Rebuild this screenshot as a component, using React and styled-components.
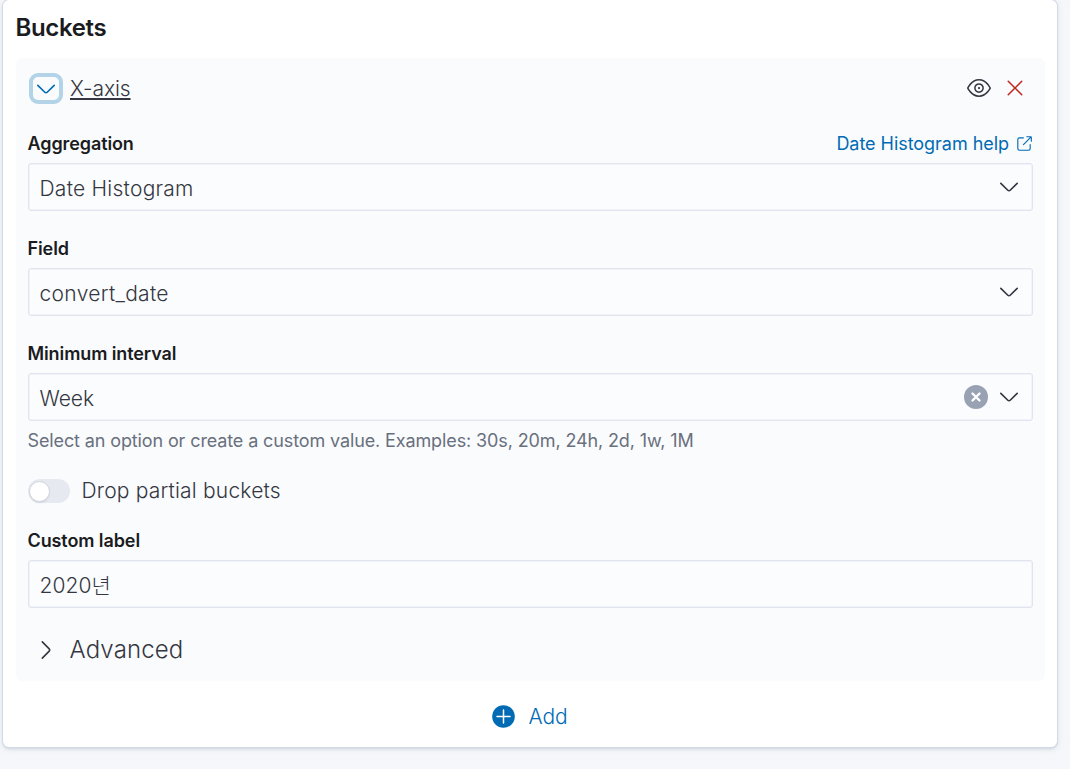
import React from "react";
import styled, { createGlobalStyle } from "styled-components";

const GlobalStyle = createGlobalStyle`
  * { box-sizing: border-box; }
  html, body { margin: 0; height: 100%; }
  body {
    background: #f5f7fa;
    color: #343741;
    font-family: Inter, "Noto Sans CJK KR", sans-serif;
    font-weight: 300;
    letter-spacing: -0.08px;
    overflow: hidden;
  }
  button, input { font: inherit; color: inherit; letter-spacing: inherit; }
`;

const Page = styled.main`
  height: 769px;
  padding: 0 13px 22px 3px;
`;

const Card = styled.section`
  height: 747px;
  padding: 10px 12px 0 13px;
  background: #fff;
  border-radius: 6px;
  box-shadow: 0 0 0 1px #d3dae6, 0 2px 3px rgba(152, 162, 179, 0.35), 0 1px 8px rgba(152, 162, 179, 0.18);
`;

const Title = styled.h2`
  margin: 0 0 0 -0.5px;
  height: 48px;
  font-size: 24px;
  line-height: 36px;
  font-weight: 600;
  letter-spacing: -0.36px;
  color: #1a1c21;
`;

const Bucket = styled.div`
  height: 623px;
  width: 1029px;
  padding: 7px 12px 0;
  background: #fafbfd;
  border-radius: 6px;
  display: flex;
  flex-direction: column;
`;

const BucketHeader = styled.header`
  height: 46px;
  display: flex;
  align-items: center;
  padding: 0 6px 0 1px;
`;

const Toggle = styled.button`
  width: 34px;
  height: 31px;
  margin: 1px 7px 0 0;
  padding: 0;
  border: 4px solid #b2d3e8;
  border-radius: 9px;
  background: #fafbfd;
  color: #006bb4;
  display: grid;
  place-items: center;
`;

const AxisName = styled.span`
  flex: 1;
  font-size: 21px;
  line-height: 30px;
  padding-top: 1px;
  letter-spacing: -0.1px;
  text-decoration: underline;
  text-decoration-thickness: 2px;
  text-underline-offset: 2px;
  text-decoration-skip-ink: none;
`;

const IconButton = styled.button`
  width: 24px;
  height: 24px;
  margin-left: 12px;
  padding: 0;
  border: 0;
  background: none;
  color: ${(p) => (p.$danger ? "#bd271e" : "#343741")};
`;

const Glyph = styled.svg`
  display: block;
  flex: none;
  fill: currentColor;
`;

const Field = styled.div`
  display: flex;
  flex-direction: column;
  margin-top: ${(p) => p.$top}px;
`;

const LabelRow = styled.div`
  display: flex;
  justify-content: space-between;
  align-items: center;
  height: 27px;
  margin-bottom: 6px;
`;

const Label = styled.label`
  margin-left: -0.5px;
  font-size: 18px;
  line-height: 27px;
  font-weight: 600;
  letter-spacing: -0.1px;
  color: #1a1c21;
`;

const HelpLink = styled.a`
  display: flex;
  align-items: center;
  gap: 6px;
  font-size: 18px;
  font-weight: 400;
  letter-spacing: -0.04px;
  color: #006bb4;
`;

const Control = styled.div`
  height: 48px;
  padding: 0 11px 0 10.5px;
  display: flex;
  align-items: center;
  gap: 9px;
  border: 1px solid #e0e4ee;
  box-shadow: inset 0 0 0 1px #f1f3f9;
  border-radius: 3px;
  background: #fbfcfd;
`;

const Value = styled.span`
  flex: 1;
  font-size: 21px;
  line-height: 30px;
  padding-top: 4px;
  letter-spacing: ${(p) => p.$tracking ?? -0.06}px;
`;

const Clear = styled.button`
  width: 24px;
  height: 24px;
  padding: 0;
  border: 0;
  border-radius: 50%;
  background: #98a2b3;
  color: #fff;
  display: grid;
  place-items: center;
`;

const HelpText = styled.p`
  margin: 6px 0 0 -0.5px;
  font-size: 18px;
  line-height: 27px;
  font-weight: 400;
  letter-spacing: -0.12px;
  color: #69707d;
`;

const SwitchRow = styled.div`
  display: flex;
  align-items: center;
  height: 30px;
  margin-top: 22px;
  gap: 12px;
`;

const SwitchLabel = styled.span`
  margin-left: -0.5px;
  padding-bottom: 2px;
  font-size: 21px;
  letter-spacing: 0.19px;
`;

const Track = styled.span`
  width: 42px;
  height: 24px;
  padding: 2px 0 0 1px;
  border-radius: 12px;
  background: #e6e9ef;
`;

const Thumb = styled.span`
  display: block;
  width: 21px;
  height: 21px;
  border-radius: 50%;
  background: #fff;
  border: 1px solid #ced3dd;
  box-shadow: 0 2px 2px -1px rgba(152, 162, 179, 0.3);
`;

const Advanced = styled.div`
  display: flex;
  align-items: center;
  gap: 12px;
  height: 36px;
  margin-top: 24px;
  padding-left: 6px;
`;

const AdvancedText = styled.span`
  margin-left: -0.5px;
  padding-bottom: 1px;
  font-size: 24px;
  letter-spacing: 0.14px;
`;

const AddRow = styled.button`
  width: 100%;
  height: 60px;
  margin-top: 5px;
  padding: 0 1px 0 0;
  border: 0;
  background: none;
  display: flex;
  align-items: center;
  justify-content: center;
  gap: 13px;
  color: #006bb4;
  font-size: 21px;
`;

const PATHS = {
  down: "M13.069 5.157L8.384 9.768a.546.546 0 01-.768 0L2.93 5.158a.552.552 0 00-.771 0 .53.53 0 000 .759l4.684 4.61c.641.631 1.672.63 2.312 0l4.684-4.61a.53.53 0 000-.76.552.552 0 00-.771 0z",
  right: "M5.157 13.069l4.611-4.685a.546.546 0 000-.768L5.158 2.93a.552.552 0 010-.771.53.53 0 01.759 0l4.61 4.684a1.65 1.65 0 010 2.312l-4.61 4.684a.53.53 0 01-.76 0 .552.552 0 010-.771z",
  eye: "M15.98 7.873c.013.03.02.064.02.098v.06a.24.24 0 01-.02.097C15.952 8.188 13.291 14 8 14S.047 8.188.02 8.128A.24.24 0 010 8.03v-.059c0-.034.007-.068.02-.098C.048 7.813 2.709 2 8 2s7.953 5.813 7.98 5.873zm-1.37-.424a12.097 12.097 0 00-1.385-1.862C11.739 3.956 9.999 3 8 3c-2 0-3.74.956-5.225 2.587a12.098 12.098 0 00-1.701 2.414 12.095 12.095 0 001.7 2.413C4.26 12.043 6.002 13 8 13s3.74-.956 5.225-2.587A12.097 12.097 0 0014.926 8c-.08-.15-.189-.343-.315-.551zM8 4.75A3.253 3.253 0 0111.25 8 3.254 3.254 0 018 11.25 3.253 3.253 0 014.75 8 3.252 3.252 0 018 4.75zm0 1C6.76 5.75 5.75 6.76 5.75 8S6.76 10.25 8 10.25 10.25 9.24 10.25 8 9.24 5.75 8 5.75zm0 1.5a.75.75 0 100 1.5.75.75 0 000-1.5z",
  cross: "M7.293 8L3.146 3.854a.5.5 0 11.708-.708L8 7.293l4.146-4.147a.5.5 0 01.708.708L8.707 8l4.147 4.146a.5.5 0 01-.708.708L8 8.707l-4.146 4.147a.5.5 0 01-.708-.708L7.293 8z",
  popout: "M13 8.5a.5.5 0 111 0V12a2 2 0 01-2 2H4a2 2 0 01-2-2V4a2 2 0 012-2h3.5a.5.5 0 010 1H4a1 1 0 00-1 1v8a1 1 0 001 1h8a1 1 0 001-1V8.5zm-5.12.339a.5.5 0 11-.706-.707L13.305 2H10.5a.5.5 0 110-1H14a1 1 0 011 1v3.5a.5.5 0 11-1 0V2.72L7.88 8.838z",
};

const Icon = ({ name, size = 24 }) => (
  <Glyph width={size} height={size} viewBox="0 0 16 16" aria-hidden="true">
    <path d={PATHS[name]} />
  </Glyph>
);

const SelectField = ({ label, value, tracking, link, clearable, top }) => (
  <Field $top={top}>
    <LabelRow>
      <Label>{label}</Label>
      {link && (
        <HelpLink>
          {link}
          <Icon name="popout" size={18} />
        </HelpLink>
      )}
    </LabelRow>
    <Control>
      <Value $tracking={tracking}>{value}</Value>
      {clearable && (
        <Clear aria-label="Clear">
          <Glyph width="12" height="12" viewBox="0 0 12 12">
            <path d="M2.5 2.5l7 7m0-7l-7 7" stroke="#fff" strokeWidth="2.4" strokeLinecap="round" />
          </Glyph>
        </Clear>
      )}
      <Icon name="down" />
    </Control>
  </Field>
);

export default function App() {
  return (
    <Page>
      <GlobalStyle />
      <Card>
        <Title>Buckets</Title>
        <Bucket>
          <BucketHeader>
            <Toggle aria-label="Toggle X-axis">
              <Icon name="down" />
            </Toggle>
            <AxisName>X-axis</AxisName>
            <IconButton aria-label="Disable">
              <Icon name="eye" />
            </IconButton>
            <IconButton $danger aria-label="Remove">
              <Icon name="cross" />
            </IconButton>
          </BucketHeader>
          <SelectField top={19} label="Aggregation" value="Date Histogram" tracking={0.25} link="Date Histogram help" />
          <SelectField top={24} label="Field" value="convert_date" tracking={0.31} />
          <SelectField top={24} label="Minimum interval" value="Week" clearable />
          <HelpText>Select an option or create a custom value. Examples: 30s, 20m, 24h, 2d, 1w, 1M</HelpText>
          <SwitchRow>
            <Track>
              <Thumb />
            </Track>
            <SwitchLabel>Drop partial buckets</SwitchLabel>
          </SwitchRow>
          <Field $top={21}>
            <LabelRow>
              <Label>Custom label</Label>
            </LabelRow>
            <Control>
              <Value $tracking={0.08}>2020년</Value>
            </Control>
          </Field>
          <Advanced>
            <Icon name="right" />
            <AdvancedText>Advanced</AdvancedText>
          </Advanced>
        </Bucket>
        <AddRow>
          <Glyph width="23" height="23" viewBox="0 0 23 23">
            <circle cx="11.5" cy="11.5" r="11.3" />
            <path d="M11.5 5v13M5 11.5h13" stroke="#fff" strokeWidth="1.5" strokeLinecap="round" />
          </Glyph>
          Add
        </AddRow>
      </Card>
    </Page>
  );
}
